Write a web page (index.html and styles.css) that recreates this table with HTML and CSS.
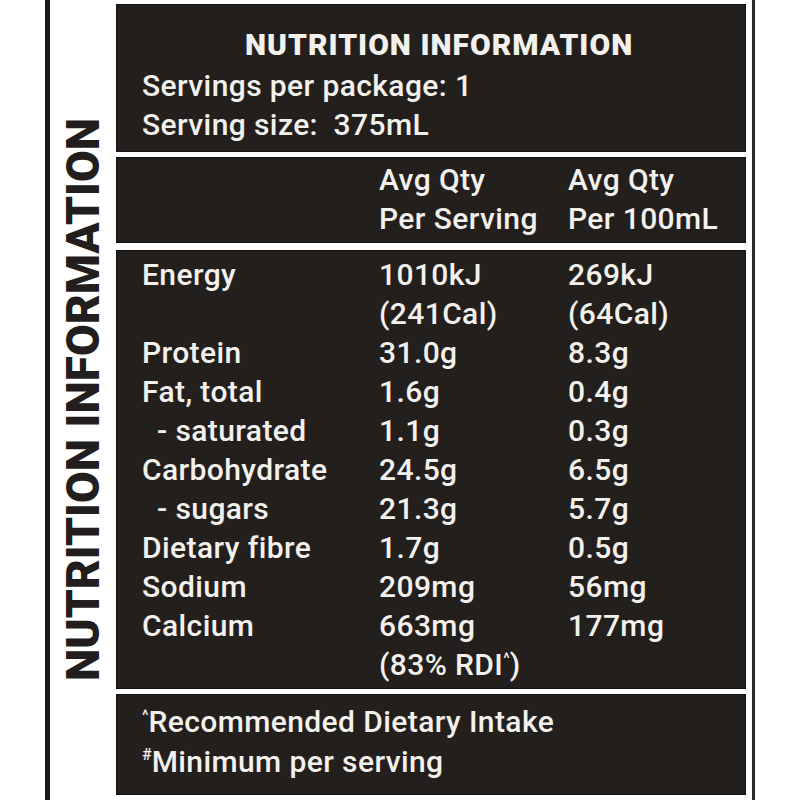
FILE: index.html
```html
<!DOCTYPE html>
<html lang="en">
<head>
<meta charset="utf-8">
<title>Nutrition Information</title>
<link rel="stylesheet" href="styles.css">
</head>
<body>
<div class="frame">
  <div class="side"><span class="side-title">NUTRITION INFORMATION</span></div>
  <div class="panels">
    <section class="panel p-head">
      <h1 class="title">NUTRITION INFORMATION</h1>
      <div class="line">Servings per package: 1</div>
      <div class="line">Serving size:&nbsp; 375mL</div>
    </section>
    <section class="panel p-cols">
      <div class="row"><span class="c1"></span><span class="c2">Avg Qty<br>Per Serving</span><span class="c3">Avg Qty<br>Per 100mL</span></div>
    </section>
    <section class="panel p-body">
      <div class="row"><span class="c1">Energy</span><span class="c2">1010kJ<br>(241Cal)</span><span class="c3">269kJ<br>(64Cal)</span></div>
      <div class="row"><span class="c1">Protein</span><span class="c2">31.0g</span><span class="c3">8.3g</span></div>
      <div class="row"><span class="c1">Fat, total</span><span class="c2">1.6g</span><span class="c3">0.4g</span></div>
      <div class="row"><span class="c1 sub">- saturated</span><span class="c2">1.1g</span><span class="c3">0.3g</span></div>
      <div class="row"><span class="c1">Carbohydrate</span><span class="c2">24.5g</span><span class="c3">6.5g</span></div>
      <div class="row"><span class="c1 sub">- sugars</span><span class="c2">21.3g</span><span class="c3">5.7g</span></div>
      <div class="row"><span class="c1">Dietary fibre</span><span class="c2">1.7g</span><span class="c3">0.5g</span></div>
      <div class="row"><span class="c1">Sodium</span><span class="c2">209mg</span><span class="c3">56mg</span></div>
      <div class="row"><span class="c1">Calcium</span><span class="c2">663mg<br>(83% RDI<sup class="mark">^</sup>)</span><span class="c3">177mg</span></div>
    </section>
    <section class="panel p-foot">
      <div class="line"><sup class="mark">^</sup>Recommended Dietary Intake</div>
      <div class="line"><sup class="mark hash">#</sup>Minimum per serving</div>
    </section>
  </div>
</div>
</body>
</html>
```
FILE: styles.css
```css
html, body {
  margin: 0;
  padding: 0;
  background: #ffffff;
}
body {
  width: 800px;
  height: 800px;
  overflow: hidden;
  font-family: Roboto, "Liberation Sans", sans-serif;
}
.frame {
  margin-left: 45px;
  width: 710px;
  height: 800px;
  box-sizing: border-box;
  border-left: 5px solid #1c1918;
  border-right: 3px solid #2b2726;
  display: flex;
}
.side {
  width: 66px;
  display: flex;
  align-items: center;
  justify-content: center;
}
.side-title {
  writing-mode: vertical-rl;
  transform: rotate(180deg);
  font-family: Roboto, "Liberation Sans", sans-serif;
  font-weight: 900;
  font-size: 46px;
  line-height: 1;
  color: #221e1d;
  white-space: nowrap;
}
.panels {
  width: 630px;
  padding-top: 4px;
  display: flex;
  flex-direction: column;
}
.panel {
  background: #231f1c;
  color: #f3f1ee;
  box-sizing: border-box;
  padding-left: 26px;
  font-size: 30px;
  font-weight: 500;
  letter-spacing: 0.4px;
  line-height: 39px;
  box-shadow: inset 0 0 0 1px #141110;
}
.p-head {
  height: 148px;
  padding-top: 21px;
}
.title {
  margin: 0 0 2px;
  font-weight: 900;
  font-size: 30px;
  line-height: 39px;
  padding-left: 103px;
  letter-spacing: 1px;
}
.p-cols {
  margin-top: 5px;
  height: 86px;
  padding-top: 3px;
}
.p-body {
  margin-top: 7px;
  height: 439px;
  padding-top: 5px;
}
.p-foot {
  margin-top: 5px;
  height: 101px;
  padding-top: 8px;
  line-height: 39.5px;
}
.row {
  display: flex;
}
.c1, .c2, .c3 { box-sizing: border-box; }
.c1 { width: 237px; flex: none; }
.c2 { width: 189px; flex: none; }
.c3 { flex: 1; }
.sub { padding-left: 15px; }
.mark {
  font-size: 15px;
  vertical-align: 12px;
  line-height: 0;
  letter-spacing: 0;
}
.hash { font-size: 16px; }
```
